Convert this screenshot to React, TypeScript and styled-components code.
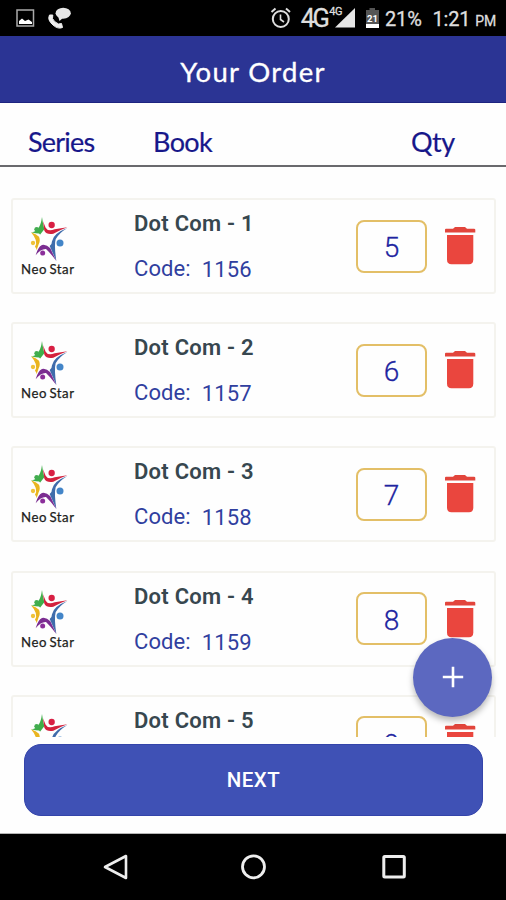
import React from 'react';
import styled, { createGlobalStyle } from 'styled-components';

const GlobalStyle = createGlobalStyle`
  * { box-sizing: border-box; }
  body { margin: 0; background: #fefefe; }
`;

const Screen = styled.div`
  display: flex;
  flex-direction: column;
  width: 506px;
  height: 900px;
  overflow: hidden;
  background: #fefefe;
  font-family: Roboto, sans-serif;
  white-space: pre;
`;

const StatusBar = styled.div`
  flex: none;
  height: 36px;
  display: flex;
  justify-content: space-between;
  background: #000;
  color: #dedede;
`;

const StatusGroup = styled.div`
  display: flex;
  align-items: flex-start;
  padding-right: 10px;
`;

const StatusText = styled.span<{ $size: number; $top: number; $left?: number; $track?: number }>`
  font-size: ${p => p.$size}px;
  line-height: 24px;
  margin-top: ${p => p.$top}px;
  margin-left: ${p => p.$left ?? 0}px;
  letter-spacing: ${p => p.$track ?? 0}px;
  -webkit-text-stroke: 0.3px #dedede;
`;

const StatusIcon = styled.svg<{ $top: number; $left: number }>`
  display: block;
  flex: none;
  margin-top: ${p => p.$top}px;
  margin-left: ${p => p.$left}px;
`;

const TitleBar = styled.header`
  flex: none;
  height: 67px;
  display: flex;
  align-items: center;
  justify-content: center;
  background: #2b3494;
  border-bottom: 1px solid #1d2480;
  color: #fff;
  font: 400 27.5px/34px Lato, sans-serif;
  letter-spacing: 1.3px;
  -webkit-text-stroke: 0.3px #fff;
  padding-top: 6px;
`;

const Columns = styled.div`
  flex: none;
  height: 64px;
  display: grid;
  grid-template-columns: 125px 258px 1fr;
  padding: 22px 0 0 28px;
  border-bottom: 2px solid #69696d;
`;

const ColumnName = styled.span<{ $track?: number }>`
  font: 400 27px/34px Lato, sans-serif;
  letter-spacing: ${p => p.$track ?? 0}px;
  color: #17178a;
  -webkit-text-stroke: 0.2px #17178a;
`;

const List = styled.div`
  flex: none;
  height: 570px;
  padding: 31px 10px 0 11px;
  display: flex;
  flex-direction: column;
  gap: 28.2px;
  overflow: hidden;
`;

const Card = styled.article`
  flex: none;
  height: 96px;
  display: grid;
  grid-template-columns: 121px 222px 71px 1fr;
  border: 2px solid #f4f3ee;
  border-radius: 3px;
`;

const Series = styled.div`
  display: flex;
  flex-direction: column;
  padding: 17px 0 0 8px;
`;

const StarMark = styled.svg`
  display: block;
  margin-left: 9px;
`;

const SeriesName = styled.span`
  font: 400 13.2px/16px Lato, sans-serif;
  color: #1d1d20;
  -webkit-text-stroke: 0.25px #1d1d20;
  letter-spacing: 0.55px;
  word-spacing: -1.5px;
  margin-top: -2px;
`;

const BookTitle = styled.div`
  font-size: 22px;
  line-height: 28px;
  font-weight: 600;
  letter-spacing: 0.25px;
  color: #37474f;
  margin-top: 10px;
`;

const BookCode = styled.div`
  display: flex;
  gap: 11px;
  margin-top: 17px;
  font-size: 22px;
  line-height: 28px;
  letter-spacing: 0.1px;
  color: #303f9f;
`;

const CodeNumber = styled.span`
  margin-top: 1px;
`;

const Qty = styled.div`
  margin-top: 19.5px;
  height: 53px;
  border: 2px solid #e3bf67;
  border-radius: 8px;
  display: flex;
  align-items: center;
  justify-content: center;
  padding-top: 4px;
  font-size: 28px;
  line-height: 32px;
  font-weight: 300;
  color: #2024a0;
  -webkit-text-stroke: 0.3px #2024a0;
`;

const TrashIcon = styled.svg`
  display: block;
  margin: 26px 0 0 17px;
`;

const Footer = styled.div`
  position: relative;
  flex: none;
  height: 97px;
  padding: 7px 23px 0 24px;
  border-bottom: 1px solid #b5b5b5;
`;

const NextButton = styled.button`
  display: block;
  width: 100%;
  height: 72px;
  padding: 0;
  border: 1px solid #3444aa;
  border-radius: 17px;
  background: #3f51b5;
  color: #fff;
  font: 500 20.5px/26px Roboto, sans-serif;
  letter-spacing: 0.5px;
`;

const AddButton = styled.button`
  position: absolute;
  right: 14px;
  top: -99.5px;
  width: 79px;
  height: 79px;
  padding: 0;
  display: flex;
  align-items: center;
  justify-content: center;
  border: 0;
  border-radius: 50%;
  background: #5c68c0;
  box-shadow: 0 4px 6px rgba(0, 0, 0, 0.28);
`;

const NavBar = styled.nav`
  flex: 1;
  background: #000;
  display: flex;
  justify-content: center;
  padding-top: 19px;
`;

const NavIcon = styled.svg`
  display: block;
  flex: none;
  width: 140px;
  height: 28px;
`;

const Star = () => (
  <StarMark width="38" height="46" viewBox="58 35 114 138">
    <path d="M94 35 Q97 58 101 72 L88 88 Q88 84 75 84 L61 81 Q88 80 94 35Z" fill="#3fae49" />
    <path d="M97 48 L105 67 Q112 80 132 72 L170 66 Q144 76 128 85 Q108 89 101 76Z" fill="#d3213d" />
    <path d="M170 68 Q144 84 135 102 Q130 120 137 167 Q126 142 117 122 Q124 118 124 108 Q128 84 170 68Z" fill="#3f6cab" />
    <path d="M75 150 Q82 124 94 119 Q107 116 119 129 L137 167 Q121 145 106 131 Q91 130 75 150Z" fill="#7b2d91" />
    <path d="M61 81 Q77 86 85 94 Q90 106 84 117 L78 134 Q77 128 73 124 Q84 107 61 81Z" fill="#e9b41e" />
    <circle cx="123" cy="59" r="9.5" fill="#d81f43" />
    <circle cx="78" cy="72" r="7" fill="#42ad50" />
    <circle cx="67" cy="113" r="6.5" fill="#efc23a" />
    <circle cx="96" cy="143" r="7.5" fill="#8b2f9a" />
    <circle cx="148" cy="113" r="10.5" fill="#4385c8" />
  </StarMark>
);

const Trash = () => (
  <TrashIcon width="32" height="40" viewBox="0 0 32 40">
    <path d="M1 3.8Q1 2.8 2 2.8H9L11 1H21L23 2.8H30Q31.300 2.8 31.300 3.8V6.500H1Z" fill="#e2453c" />
    <path d="M3 9H29.300V33.500Q29.300 38.200 25 38.200H7.500Q3 38.200 3 33.500Z" fill="#ea463e" />
  </TrashIcon>
);

const books = [
  { id: 1, code: 1156, qty: 5 },
  { id: 2, code: 1157, qty: 6 },
  { id: 3, code: 1158, qty: 7 },
  { id: 4, code: 1159, qty: 8 },
  { id: 5, code: 1160, qty: 9 },
];

export default function App() {
  return (
    <>
      <GlobalStyle />
      <Screen>
        <StatusBar>
          <StatusGroup>
            <StatusIcon $top={9} $left={16} width="19" height="18" viewBox="0 0 19 18">
              <rect x="1" y="1" width="16.5" height="16" fill="none" stroke="#aaa" strokeWidth="1.5" />
              <path d="M3 15V12L6 9.5L9 12L12.5 10.5L16 13V15Z" fill="#fff" />
            </StatusIcon>
            <StatusIcon $top={7} $left={12} width="26" height="23" viewBox="0 0 26 23">
              <path d="M2.5 8Q0 13 6 18Q11 22.5 15.5 20.5L14.5 16.5L11.5 17Q7 15 5.5 11.5L5.8 8Z" fill="#eee" stroke="#eee" strokeLinejoin="round" />
              <ellipse cx="16.2" cy="6.2" rx="7.6" ry="5.5" fill="#e6e6e6" />
              <path d="M11 9L12.5 14L17 10Z" fill="#e6e6e6" />
            </StatusIcon>
          </StatusGroup>
          <StatusGroup>
            <StatusIcon $top={7} $left={0} width="22" height="22" viewBox="0 0 22 22">
              <g fill="none" stroke="#dedede" strokeWidth="2">
                <circle cx="10.8" cy="12" r="8" />
                <path d="M1.5 5L5.5 1.5M16 1.5L20 5" />
                <path d="M10.5 7.5V12.5L14 15" strokeWidth="1.6" />
              </g>
            </StatusIcon>
            <StatusText $size={25.5} $top={6} $left={9} $track={-2.6}>4G</StatusText>
            <StatusText $size={11} $top={0} $left={2} $track={-0.5}>4G</StatusText>
            <StatusIcon $top={8} $left={-7} width="20" height="20" viewBox="0 0 20 20">
              <path d="M20 0V19.5H0Z" fill="#e6e6e6" />
            </StatusIcon>
            <StatusIcon $top={8} $left={10} width="15" height="21" viewBox="0 0 15 21">
              <path d="M4.5 0H10V2H14V20H1V2H4.5Z" fill="#555" />
              <rect x="1" y="16" width="13" height="4" fill="#fff" />
              <text x="7.5" y="13.5" textAnchor="middle" fontFamily="Roboto" fontWeight="700" fontSize="9.5" fill="#fff">21</text>
            </StatusIcon>
            <StatusText $size={20} $top={7} $left={5} $track={-0.2}>21%</StatusText>
            <StatusText $size={20} $top={7} $left={11} $track={-0.2}>1:21</StatusText>
            <StatusText $size={14} $top={9} $left={5} $track={-0.2}>PM</StatusText>
          </StatusGroup>
        </StatusBar>
        <TitleBar>Your Order</TitleBar>
        <Columns>
          <ColumnName $track={-0.8}>Series</ColumnName>
          <ColumnName $track={-0.6}>Book</ColumnName>
          <ColumnName $track={-0.5}>Qty</ColumnName>
        </Columns>
        <List>
          {books.map(b => (
            <Card key={b.id}>
              <Series>
                <Star />
                <SeriesName>Neo Star</SeriesName>
              </Series>
              <div>
                <BookTitle>{`Dot Com - ${b.id}`}</BookTitle>
                <BookCode>
                  <span>Code:</span>
                  <CodeNumber>{b.code}</CodeNumber>
                </BookCode>
              </div>
              <Qty>{b.qty}</Qty>
              <Trash />
            </Card>
          ))}
        </List>
        <Footer>
          <NextButton>NEXT</NextButton>
          <AddButton aria-label="Add book">
            <svg width="22" height="22" viewBox="0 0 22 22">
              <path d="M11 .8V21.200M.8 11H21.200" stroke="#fff" strokeWidth="2.6" />
            </svg>
          </AddButton>
        </Footer>
        <NavBar>
          <NavIcon viewBox="0 0 140 28">
            <path d="M62 14L83 3V25Z" fill="none" stroke="#eee" strokeWidth="2.6" strokeLinejoin="round" />
          </NavIcon>
          <NavIcon viewBox="0 0 140 28">
            <circle cx="70.5" cy="13.8" r="11" fill="none" stroke="#eee" strokeWidth="2.8" />
          </NavIcon>
          <NavIcon viewBox="0 0 140 28">
            <rect x="60.8" y="3.5" width="20.5" height="20.5" rx="1" fill="none" stroke="#eee" strokeWidth="3" />
          </NavIcon>
        </NavBar>
      </Screen>
    </>
  );
}
